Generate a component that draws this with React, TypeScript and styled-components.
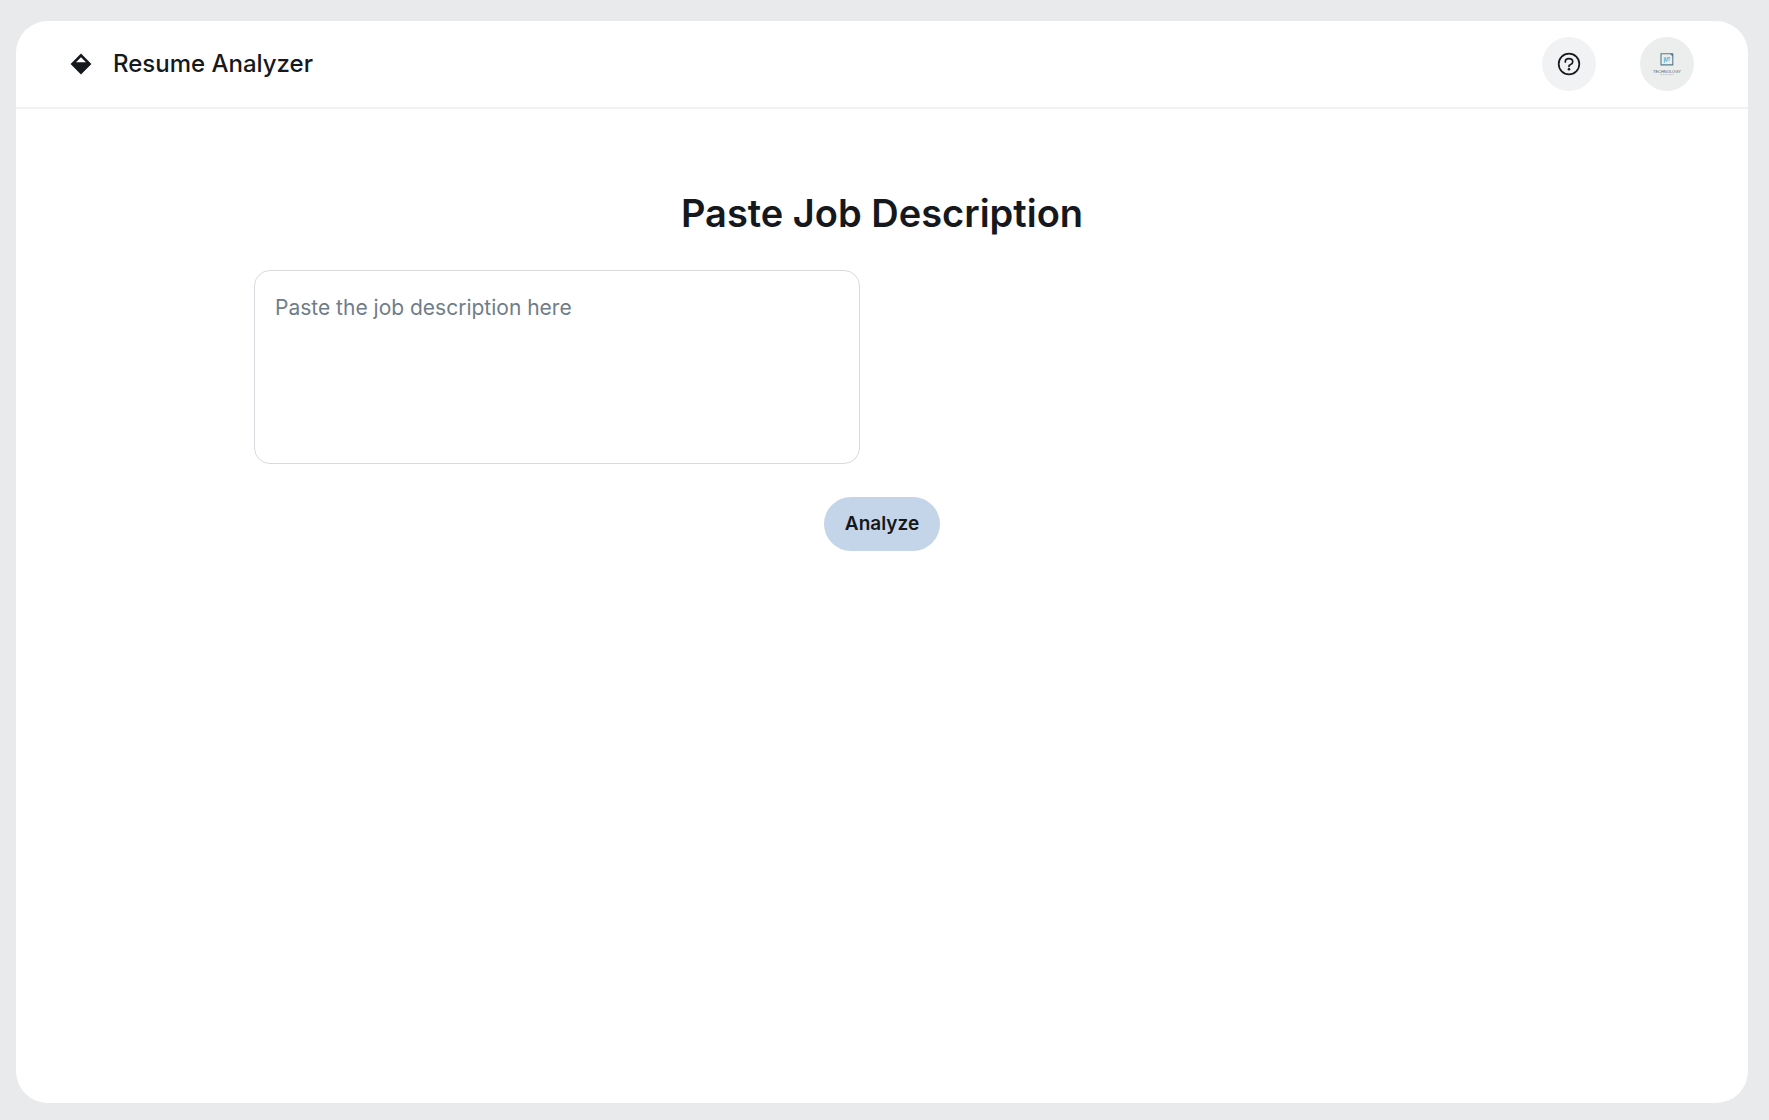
import React, { useState } from "react";
import styled, { createGlobalStyle } from "styled-components";

const font = `Inter, "Noto Sans", sans-serif`;

const GlobalStyle = createGlobalStyle`
  *, *::before, *::after { box-sizing: border-box; }
  body {
    margin: 0;
    background: #e8eaec;
    color: #15181c;
    font-family: ${font};
  }
`;

const Page = styled.div`
  display: flex;
  min-height: 100vh;
  padding: 21px 21px 17px 16px;
`;

const Panel = styled.div`
  flex: 1;
  display: flex;
  flex-direction: column;
  background: #ffffff;
  border-radius: 32px;
`;

const Header = styled.header`
  display: flex;
  align-items: center;
  justify-content: space-between;
  padding: 16px 54px;
  border-bottom: 2px solid #f0f2f4;
`;

const Brand = styled.div`
  display: flex;
  align-items: center;
  gap: 21px;
`;

const BrandName = styled.h2`
  margin: 0;
  font-size: 24px;
  line-height: 30px;
  font-weight: 500;
`;

const Actions = styled.div`
  display: flex;
  gap: 44px;
`;

const RoundButton = styled.button<{ $tone: string }>`
  display: flex;
  align-items: center;
  justify-content: center;
  width: 54px;
  height: 54px;
  padding: 0;
  border: 0;
  border-radius: 50%;
  background: ${(p) => p.$tone};
  color: #15181c;
  cursor: pointer;
`;

const Main = styled.main`
  display: flex;
  justify-content: center;
  padding: 83px 54px 22px;
`;

const Form = styled.form`
  flex: 1;
  max-width: 1256px;
  display: flex;
  flex-direction: column;
`;

const Title = styled.h1`
  margin: 0;
  text-align: center;
  font-size: 38px;
  line-height: 42px;
  font-weight: 600;
`;

const Fields = styled.div`
  display: grid;
  grid-template-columns: 1fr 1fr;
  gap: 44px;
  padding: 36px 0 33px;
`;

const TextBox = styled.textarea`
  display: block;
  width: 100%;
  height: 194px;
  padding: 21px 20px;
  border: 1px solid #d7dae0;
  border-radius: 16px;
  background: #ffffff;
  color: #15181c;
  font-family: ${font};
  font-size: 21px;
  line-height: 32px;
  resize: none;
  outline: none;

  &::placeholder {
    color: #6f7d8a;
    opacity: 1;
  }
`;

const SubmitButton = styled.button`
  align-self: center;
  height: 54px;
  padding: 0 21px;
  border: 0;
  border-radius: 27px;
  background: #c4d4e9;
  color: #15181c;
  font-family: ${font};
  font-size: 19px;
  line-height: 28px;
  font-weight: 600;
  cursor: pointer;
`;

function DiamondLogo() {
  return (
    <svg width="22" height="22" viewBox="0 0 22 22" aria-hidden="true">
      <path
        fill="currentColor"
        fillRule="evenodd"
        d="M11 .6 21.4 11 11 21.4.6 11ZM11 4.2 6 9.3h10Z"
      />
    </svg>
  );
}

function HelpIcon() {
  return (
    <svg width="24" height="24" viewBox="0 0 24 24" fill="none" aria-hidden="true">
      <circle cx="12" cy="12" r="10.3" stroke="currentColor" strokeWidth="1.7" />
      <path
        d="M8.3 9.9c0-1.9 1.6-3.2 3.7-3.2s3.7 1.3 3.7 3.1c0 1.5-.9 2.3-2.1 2.7-1 .4-1.6.9-1.6 1.6v.4"
        stroke="currentColor"
        strokeWidth="1.7"
        strokeLinecap="round"
      />
      <circle cx="12" cy="17.3" r="1.3" fill="currentColor" />
    </svg>
  );
}

function CompanyLogo() {
  return (
    <svg width="54" height="54" viewBox="0 0 54 54" fill="none" aria-hidden="true">
      <path d="M21 16.7h9.6l2.2 2.2v9H21Z" stroke="#557b8c" strokeWidth="1.1" />
      <path d="M29.8 16.2h3.5v3.5Z" fill="#557b8c" />
      <path
        d="M24.4 26v-5.4l2.3 4 1-4.6M27.2 20.6h3.2M29 20.6V24M25.8 20v4.4"
        stroke="#76bcd6"
        strokeWidth="1"
      />
      <text
        x="27"
        y="36"
        textAnchor="middle"
        fill="#55585c"
        fontFamily='"Liberation Sans", sans-serif'
        fontSize="4"
      >
        TECHNOLOGY
      </text>
      <path d="M20 37.6h14" stroke="#b9bdbf" strokeWidth=".7" strokeDasharray="2 .6" />
    </svg>
  );
}

export default function App() {
  const [description, setDescription] = useState("");

  return (
    <>
      <GlobalStyle />
      <Page>
        <Panel>
          <Header>
            <Brand>
              <DiamondLogo />
              <BrandName>Resume Analyzer</BrandName>
            </Brand>
            <Actions>
              <RoundButton type="button" $tone="#f0f2f4" aria-label="Help">
                <HelpIcon />
              </RoundButton>
              <RoundButton type="button" $tone="#eceeee" aria-label="Account">
                <CompanyLogo />
              </RoundButton>
            </Actions>
          </Header>
          <Main>
            <Form onSubmit={(e) => e.preventDefault()}>
              <Title>Paste Job Description</Title>
              <Fields>
                <TextBox
                  aria-label="Job description"
                  placeholder="Paste the job description here"
                  value={description}
                  onChange={(e) => setDescription(e.target.value)}
                />
              </Fields>
              <SubmitButton type="submit">Analyze</SubmitButton>
            </Form>
          </Main>
        </Panel>
      </Page>
    </>
  );
}
